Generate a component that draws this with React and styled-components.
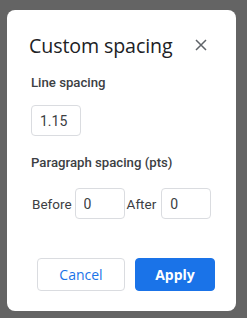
import React from "react";
import styled, { createGlobalStyle } from "styled-components";

const Global = createGlobalStyle`
  html, body { margin: 0; padding: 0; background: #646464; }
  body { width: 247px; height: 318px; overflow: hidden; font-family: Roboto, "Liberation Sans", sans-serif; }
`;

const Page = styled.div`
  width: 247px;
  height: 318px;
  box-sizing: border-box;
  padding: 10px 11px 7px 7px;
  background: #646464;
`;

const Dialog = styled.div`
  width: 229px;
  height: 301px;
  box-sizing: border-box;
  background: #fff;
  border-radius: 8px;
  padding: 24px 21px 0 24px;
  display: flex;
  flex-direction: column;
`;

const Header = styled.div`
  display: flex;
  align-items: center;
  justify-content: space-between;
  height: 22px;
  padding-right: 8px;
`;

const Title = styled.h1`
  margin: 0 0 0 -2px;
  font-family: "Open Sans", Roboto, sans-serif;
  font-weight: 400;
  font-size: 19.6px;
  letter-spacing: -0.1px;
  color: #202124;
`;

const Close = styled.button`
  border: 0;
  background: none;
  padding: 0;
  width: 12px;
  height: 12px;
  display: flex;
  cursor: pointer;
`;

const Label = styled.div`
  font-size: 13.2px;
  font-weight: 500;
  color: #3c4043;
  margin-top: ${(p) => p.$top}px;
  line-height: 16px;
`;

const Field = styled.input`
  box-sizing: border-box;
  width: ${(p) => p.$w}px;
  height: 31px;
  border: 1px solid #dadce0;
  border-radius: 4px;
  padding: 0 0 0 8px;
  font-family: Roboto, "Liberation Sans", sans-serif;
  font-size: 14px;
  color: #3c4043;
  outline: none;
`;

const Row = styled.div`
  display: flex;
  align-items: center;
  margin-top: ${(p) => p.$top}px;
`;

const RowText = styled.span`
  font-size: 13.5px;
  color: #3c4043;
  margin: 0 ${(p) => p.$right}px 0 ${(p) => p.$left}px;
`;

const Actions = styled.div`
  margin-top: auto;
  margin-bottom: 20px;
  display: flex;
  justify-content: flex-end;
  gap: 10px;
`;

const Btn = styled.button`
  box-sizing: border-box;
  width: ${(p) => p.$w}px;
  height: 33px;
  border-radius: 4px;
  font-family: "Open Sans", Roboto, sans-serif;
  font-size: 14px;
  font-weight: ${(p) => (p.$primary ? 700 : 500)};
  border: 1px solid ${(p) => (p.$primary ? "#1a73e8" : "#dadce0")};
  background: ${(p) => (p.$primary ? "#1a73e8" : "#fff")};
  color: ${(p) => (p.$primary ? "#fff" : "#1a73e8")};
  padding: 0;
  cursor: pointer;
`;

export default function App() {
  return (
    <>
      <Global />
      <Page>
        <Dialog>
          <Header>
            <Title>Custom spacing</Title>
            <Close aria-label="Close">
              <svg width="12" height="12" viewBox="0 0 12 12">
                <path d="M1 1L11 11M11 1L1 11" stroke="#5f6368" strokeWidth="1.5" />
              </svg>
            </Close>
          </Header>
          <Label $top={19}>Line spacing</Label>
          <Row $top={14}>
            <Field $w={50} defaultValue="1.15" />
          </Row>
          <Label $top={19}>Paragraph spacing (pts)</Label>
          <Row $top={17}>
            <RowText $left={1} $right={3}>Before</RowText>
            <Field $w={50} defaultValue="0" />
            <RowText $left={2} $right={5}>After</RowText>
            <Field $w={50} defaultValue="0" />
          </Row>
          <Actions>
            <Btn $w={88}>Cancel</Btn>
            <Btn $w={80} $primary>Apply</Btn>
          </Actions>
        </Dialog>
      </Page>
    </>
  );
}
